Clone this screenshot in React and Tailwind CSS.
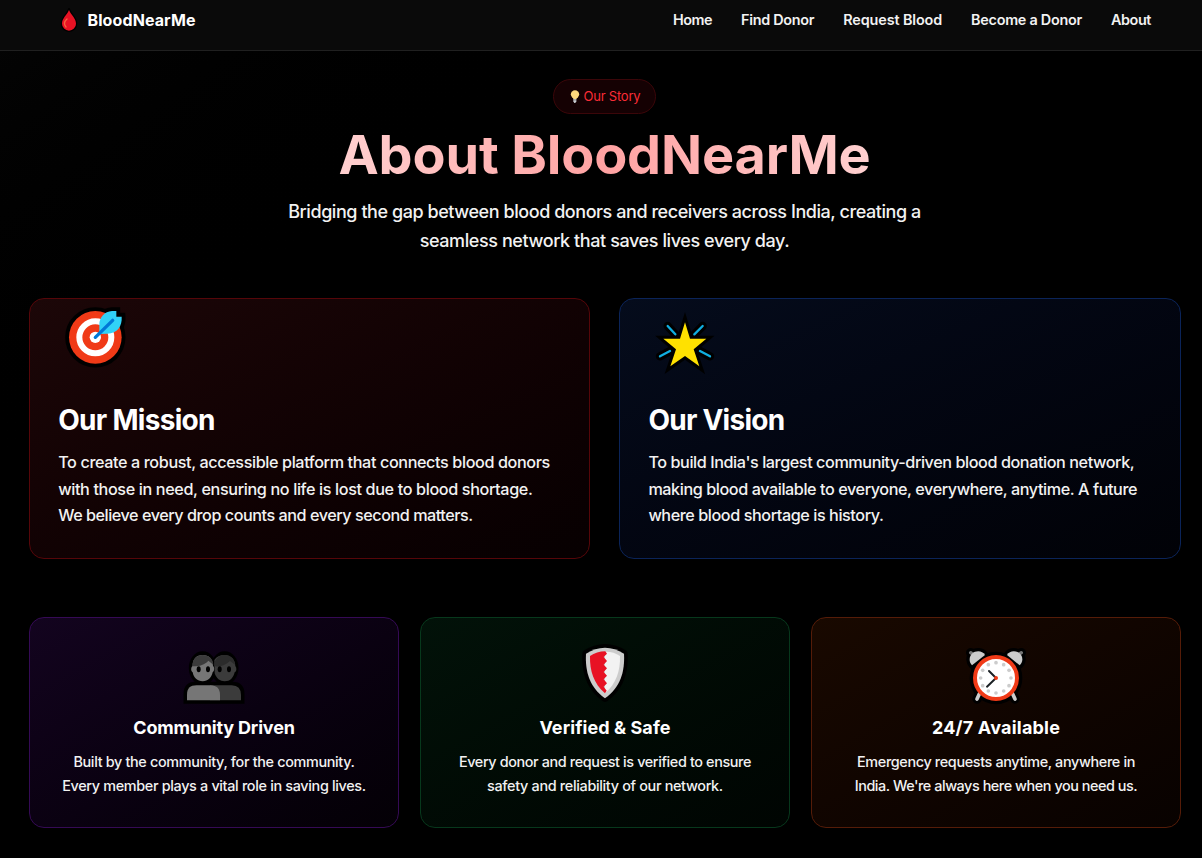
const navItems = [
  { label: 'Home', track: 'tracking-[-0.48px]' },
  { label: 'Find Donor', track: 'tracking-[-0.28px]' },
  { label: 'Request Blood', track: 'tracking-[-0.12px]' },
  { label: 'Become a Donor', track: 'tracking-[-0.27px]' },
  { label: 'About', track: 'tracking-[-0.4px]' },
];

function DropIcon() {
  return (
    <svg className="h-[24px] w-[18px]" viewBox="0 0 54 72" aria-hidden="true">
      <path d="M27 6C20 22 6 31 6 47a21 21 0 0 0 42 0C48 31 34 22 27 6Z" fill="#e81224" stroke="#000" strokeWidth="8" paintOrder="stroke" />
      <path d="M21 33c-9 8-10 16-3 24" fill="none" stroke="#f4633f" strokeWidth="4" strokeLinecap="round" />
    </svg>
  );
}

function BulbIcon() {
  return (
    <svg className="h-[15px] w-[10px]" viewBox="0 0 30 45" aria-hidden="true">
      <path d="M10 26h9v11l-3 5h-3l-3-5Z" fill="#c9cdd2" />
      <circle cx="15" cy="16" r="12.5" fill="#ffd77d" />
      <path d="M9 24h12l-2 6h-8Z" fill="#ffd77d" />
      <path d="M10 33h9" stroke="#777" strokeWidth="2" />
    </svg>
  );
}

function TargetIcon() {
  const feather = 'M238 132V104C238 82 254 64 276 63H289V80H305C307 108 292 130 262 131Z';
  return (
    <svg className="size-[66px]" viewBox="126 42 198 198" aria-hidden="true">
      <g fill="#000" stroke="#000" strokeWidth="23" strokeLinejoin="miter">
        <circle cx="226" cy="142" r="79" />
        <path d={feather} />
      </g>
      <circle cx="226" cy="142" r="79" fill="#f03a17" />
      <circle cx="226" cy="142" r="48" fill="none" stroke="#fff" strokeWidth="18" />
      <circle cx="226" cy="142" r="17" fill="#fff" />
      <path d={feather} fill="#31d2f7" />
      <path d="M226 142 278 91" stroke="#0078d7" strokeWidth="10" strokeLinecap="round" />
    </svg>
  );
}

function StarIcon() {
  const rays = 'M173 108 196 133M278 108 253 133M150 199 180 183M300 199 270 183';
  return (
    <svg className="size-[66px]" viewBox="126 60 198 198" aria-hidden="true">
      <path d={rays} stroke="#000" strokeWidth="25" strokeLinecap="round" />
      <path d="M225 97 240 146H289L251 178 268 229 225 198 181 229 198 178 160 146H210Z" fill="#ffe100" stroke="#000" strokeWidth="18" strokeMiterlimit="5" paintOrder="stroke" />
      <path d={rays} stroke="#10aee0" strokeWidth="7" strokeLinecap="round" />
    </svg>
  );
}

function PeopleIcon() {
  return (
    <svg className="h-[56px] w-[64px]" viewBox="36 42 192 168" aria-hidden="true">
      <g fill="#000" stroke="#000" strokeWidth="21">
        <ellipse cx="98" cy="99" rx="31" ry="40" />
        <ellipse cx="164" cy="99" rx="31" ry="40" />
        <path d="M51 196V178Q51 151 77 151H187Q213 151 213 178V196Z" />
      </g>
      <path d="M120 196V151H185Q213 152 213 180V196Z" fill="#3b3b3b" />
      <path d="M133 75Q143 60 164 60C183 60 196 75 196 93Q200 97 199 105 198 110 194 112C190 129 180 139 164 139 150 139 139 130 134 115Z" fill="#3b3b3b" />
      <path d="M133 83C140 67 151 60 164 60c17 0 30 10 31 29L180 78C165 91 150 96 133 94Z" fill="#2b2b2b" />
      <path d="M51 196V180C51 160 60 151 80 151H121C141 151 150 162 150 180V196Z" fill="#767676" />
      <path d="M68 92C68 71 80 60 98 60s31 12 31 32c5 5 5 15-1 20-4 16-14 27-30 27s-27-11-30-27c-6-4-6-15 0-20Z" fill="#767676" />
      <path d="M67 94C67 72 80 60 98 60c18 0 31 11 32 29L115 77C104 90 85 95 67 94Z" fill="#3b3b3b" />
      <g fill="#000">
        <ellipse cx="86" cy="103" rx="6" ry="9" />
        <ellipse cx="114" cy="103" rx="6" ry="9" />
        <ellipse cx="149" cy="103" rx="6" ry="9" />
        <ellipse cx="177" cy="103" rx="6" ry="9" />
      </g>
    </svg>
  );
}

function ShieldIcon() {
  return (
    <svg className="h-[60px] w-[48px]" viewBox="48 24 144 180" aria-hidden="true">
      <path d="M63 56Q90 38 120 38T177 56C180 110 166 157 120 190 74 157 60 110 63 56Z" fill="#ccc" stroke="#000" strokeWidth="22" strokeLinejoin="round" paintOrder="stroke" />
      <path d="M120 50Q145 49 165 63C166 108 154 145 120 175Z" fill="#f2f2f2" />
      <path d="M75 63Q95 49 121 49L126 56 116 66 126 78 116 89 126 100 116 111 126 122 116 133 126 145 116 155 125 167 120 175C86 145 74 108 75 63Z" fill="#e81224" />
    </svg>
  );
}

const clockDots = [
  [138, 83], [161, 89], [177, 106], [183, 129], [177, 152], [161, 168],
  [138, 174], [115, 168], [98, 152], [92, 129], [98, 106], [115, 89],
];

function ClockIcon() {
  const leftBell = 'M66 91C57 81 56 66 66 56 77 46 97 46 105 60Z';
  const rightBell = 'M209 91C219 81 220 66 210 56 199 46 179 46 171 60Z';
  return (
    <svg className="h-[58px] w-[62px]" viewBox="45 36 186 174" aria-hidden="true">
      <g fill="#000" stroke="#000" strokeWidth="20" strokeLinejoin="round">
        <circle cx="138" cy="129" r="69" />
        <path d={leftBell} />
        <path d={rightBell} />
        <path d="M62 53 72 60M214 53 204 60M89 175 81 192M187 175 195 192" strokeWidth="28" strokeLinecap="round" />
      </g>
      <path d="M89 175 81 192M187 175 195 192" stroke="#ccc" strokeWidth="11" strokeLinecap="round" />
      <path d="M62 53 70 59M214 53 206 59" stroke="#767676" strokeWidth="10" strokeLinecap="round" />
      <path d={leftBell} fill="#ccc" />
      <path d={rightBell} fill="#ccc" />
      <circle cx="138" cy="129" r="63" fill="#fff" stroke="#f03a17" strokeWidth="12" />
      {clockDots.map(([x, y]) => <circle key={`${x}-${y}`} cx={x} cy={y} r="5.5" fill="#ccc" />)}
      <path d="M117 108 138 129 111 155" fill="none" stroke="#1b2024" strokeWidth="6" strokeLinecap="round" />
      <circle cx="138" cy="129" r="6" fill="#f03a17" />
    </svg>
  );
}

const statements = [
  {
    title: 'Our Mission', Icon: TargetIcon, iconPad: 'pt-[5px]', titleTrack: 'tracking-[-0.7px]',
    tone: 'border-[#560609] from-[#1c0708] to-[#070001]',
    lines: [
      { text: 'To create a robust, accessible platform that connects blood donors', track: 'tracking-[-0.385px]' },
      { text: 'with those in need, ensuring no life is lost due to blood shortage.', track: 'tracking-[-0.368px]' },
      { text: 'We believe every drop counts and every second matters.', track: 'tracking-[-0.465px]' },
    ],
  },
  {
    title: 'Our Vision', Icon: StarIcon, iconPad: 'pt-[11px]', titleTrack: 'tracking-[-0.74px]',
    tone: 'border-[#0b2459] from-[#050c1c] to-[#010207]',
    lines: [
      { text: "To build India's largest community-driven blood donation network,", track: 'tracking-[-0.422px]' },
      { text: 'making blood available to everyone, everywhere, anytime. A future', track: 'tracking-[-0.42px]' },
      { text: 'where blood shortage is history.', track: 'tracking-[-0.425px]' },
    ],
  },
];

const features = [
  {
    title: 'Community Driven', Icon: PeopleIcon, iconPad: 'pt-[31px]', titleTrack: 'tracking-[-0.18px]',
    tone: 'border-[#350a55] from-[#13041f] to-[#040006]',
    lines: [
      { text: 'Built by the community, for the community.', track: 'tracking-[-0.33px]' },
      { text: 'Every member plays a vital role in saving lives.', track: 'tracking-[-0.33px]' },
    ],
  },
  {
    title: 'Verified & Safe', Icon: ShieldIcon, iconPad: 'pt-[25px]', titleTrack: 'tracking-[0.07px]',
    tone: 'border-[#07381c] from-[#021209] to-[#000502]',
    lines: [
      { text: 'Every donor and request is verified to ensure', track: 'tracking-[-0.375px]' },
      { text: 'safety and reliability of our network.', track: 'tracking-[-0.325px]' },
    ],
  },
  {
    title: '24/7 Available', Icon: ClockIcon, iconPad: 'pt-[29px]', titleTrack: 'tracking-[0.2px]',
    tone: 'border-[#551c08] from-[#190900] to-[#080200]',
    lines: [
      { text: 'Emergency requests anytime, anywhere in', track: 'tracking-[-0.36px]' },
      { text: "India. We're always here when you need us.", track: 'tracking-[-0.448px]' },
    ],
  },
];

export default function App() {
  return (
    <div className="h-[858px] overflow-hidden bg-black bg-linear-to-br from-[#050505] via-black via-30% to-black font-['Inter',sans-serif] font-[460] whitespace-nowrap text-[#f2f2f2]">
      <header className="flex h-[51px] items-start justify-between border-b border-[#202020] bg-[#0a0a0a] pr-[51px] pl-[59.5px]">
        <div className="flex items-center gap-[10px] pt-[8px]">
          <DropIcon />
          <span className="text-[16px] leading-6 font-bold tracking-[0.1px] text-white">BloodNearMe</span>
        </div>
        <nav className="flex gap-[29px] pt-[8px] text-[14.4px] leading-6 font-semibold">
          {navItems.map(({ label, track }) => <a key={label} className={track}>{label}</a>)}
        </nav>
      </header>

      <main className="pr-[21px] pl-[29px] pt-[28px]">
        <section className="flex h-[219px] flex-col items-center pr-px">
          <div className="flex h-[35px] w-[103px] items-center justify-center gap-[4px] rounded-full border border-[#3b0609] bg-[#150103] pl-px text-[13px] font-normal tracking-[-0.23px] text-[#fb2c36]">
            <BulbIcon />
            <span>Our Story</span>
          </div>
          <h1 className="mt-[8px] bg-linear-to-r from-[#ffd0d0] via-[#ffa2a2] to-[#ffd0d0] bg-clip-text text-[54px] leading-[66px] font-bold tracking-[-0.16px] text-transparent">About BloodNearMe</h1>
          <p className="mt-[9px] text-center text-[18px] leading-[29px]">
            <span className="block tracking-[-0.442px]">Bridging the gap between blood donors and receivers across India, creating a</span>
            <span className="block tracking-[-0.41px]">seamless network that saves lives every day.</span>
          </p>
        </section>

        <section className="grid grid-cols-[561.2px_561.8px] gap-[29px]">
          {statements.map(({ title, Icon, iconPad, titleTrack, tone, lines }) => (
            <article key={title} className={`h-[261px] rounded-[15px] border bg-linear-to-br px-[28.2px] ${tone}`}>
              <div className={`h-[102px] pl-[4px] ${iconPad}`}><Icon /></div>
              <h2 className={`text-[28px] leading-[38px] font-bold text-white ${titleTrack}`}>{title}</h2>
              <p className="mt-[10px] text-[16.2px] leading-[26.5px]">
                {lines.map(({ text, track }) => <span key={text} className={`block ${track}`}>{text}</span>)}
              </p>
            </article>
          ))}
        </section>

        <section className="mt-[58px] grid grid-cols-3 gap-[21px]">
          {features.map(({ title, Icon, iconPad, titleTrack, tone, lines }) => (
            <article key={title} className={`h-[211px] rounded-[15px] border bg-linear-to-br text-center ${tone}`}>
              <div className={`flex h-[96px] justify-center ${iconPad}`}><Icon /></div>
              <h3 className={`text-[18px] leading-[28px] font-bold text-white ${titleTrack}`}>{title}</h3>
              <p className="mt-[8px] text-[14.4px] leading-[24px]">
                {lines.map(({ text, track }) => <span key={text} className={`block ${track}`}>{text}</span>)}
              </p>
            </article>
          ))}
        </section>
      </main>
    </div>
  );
}
